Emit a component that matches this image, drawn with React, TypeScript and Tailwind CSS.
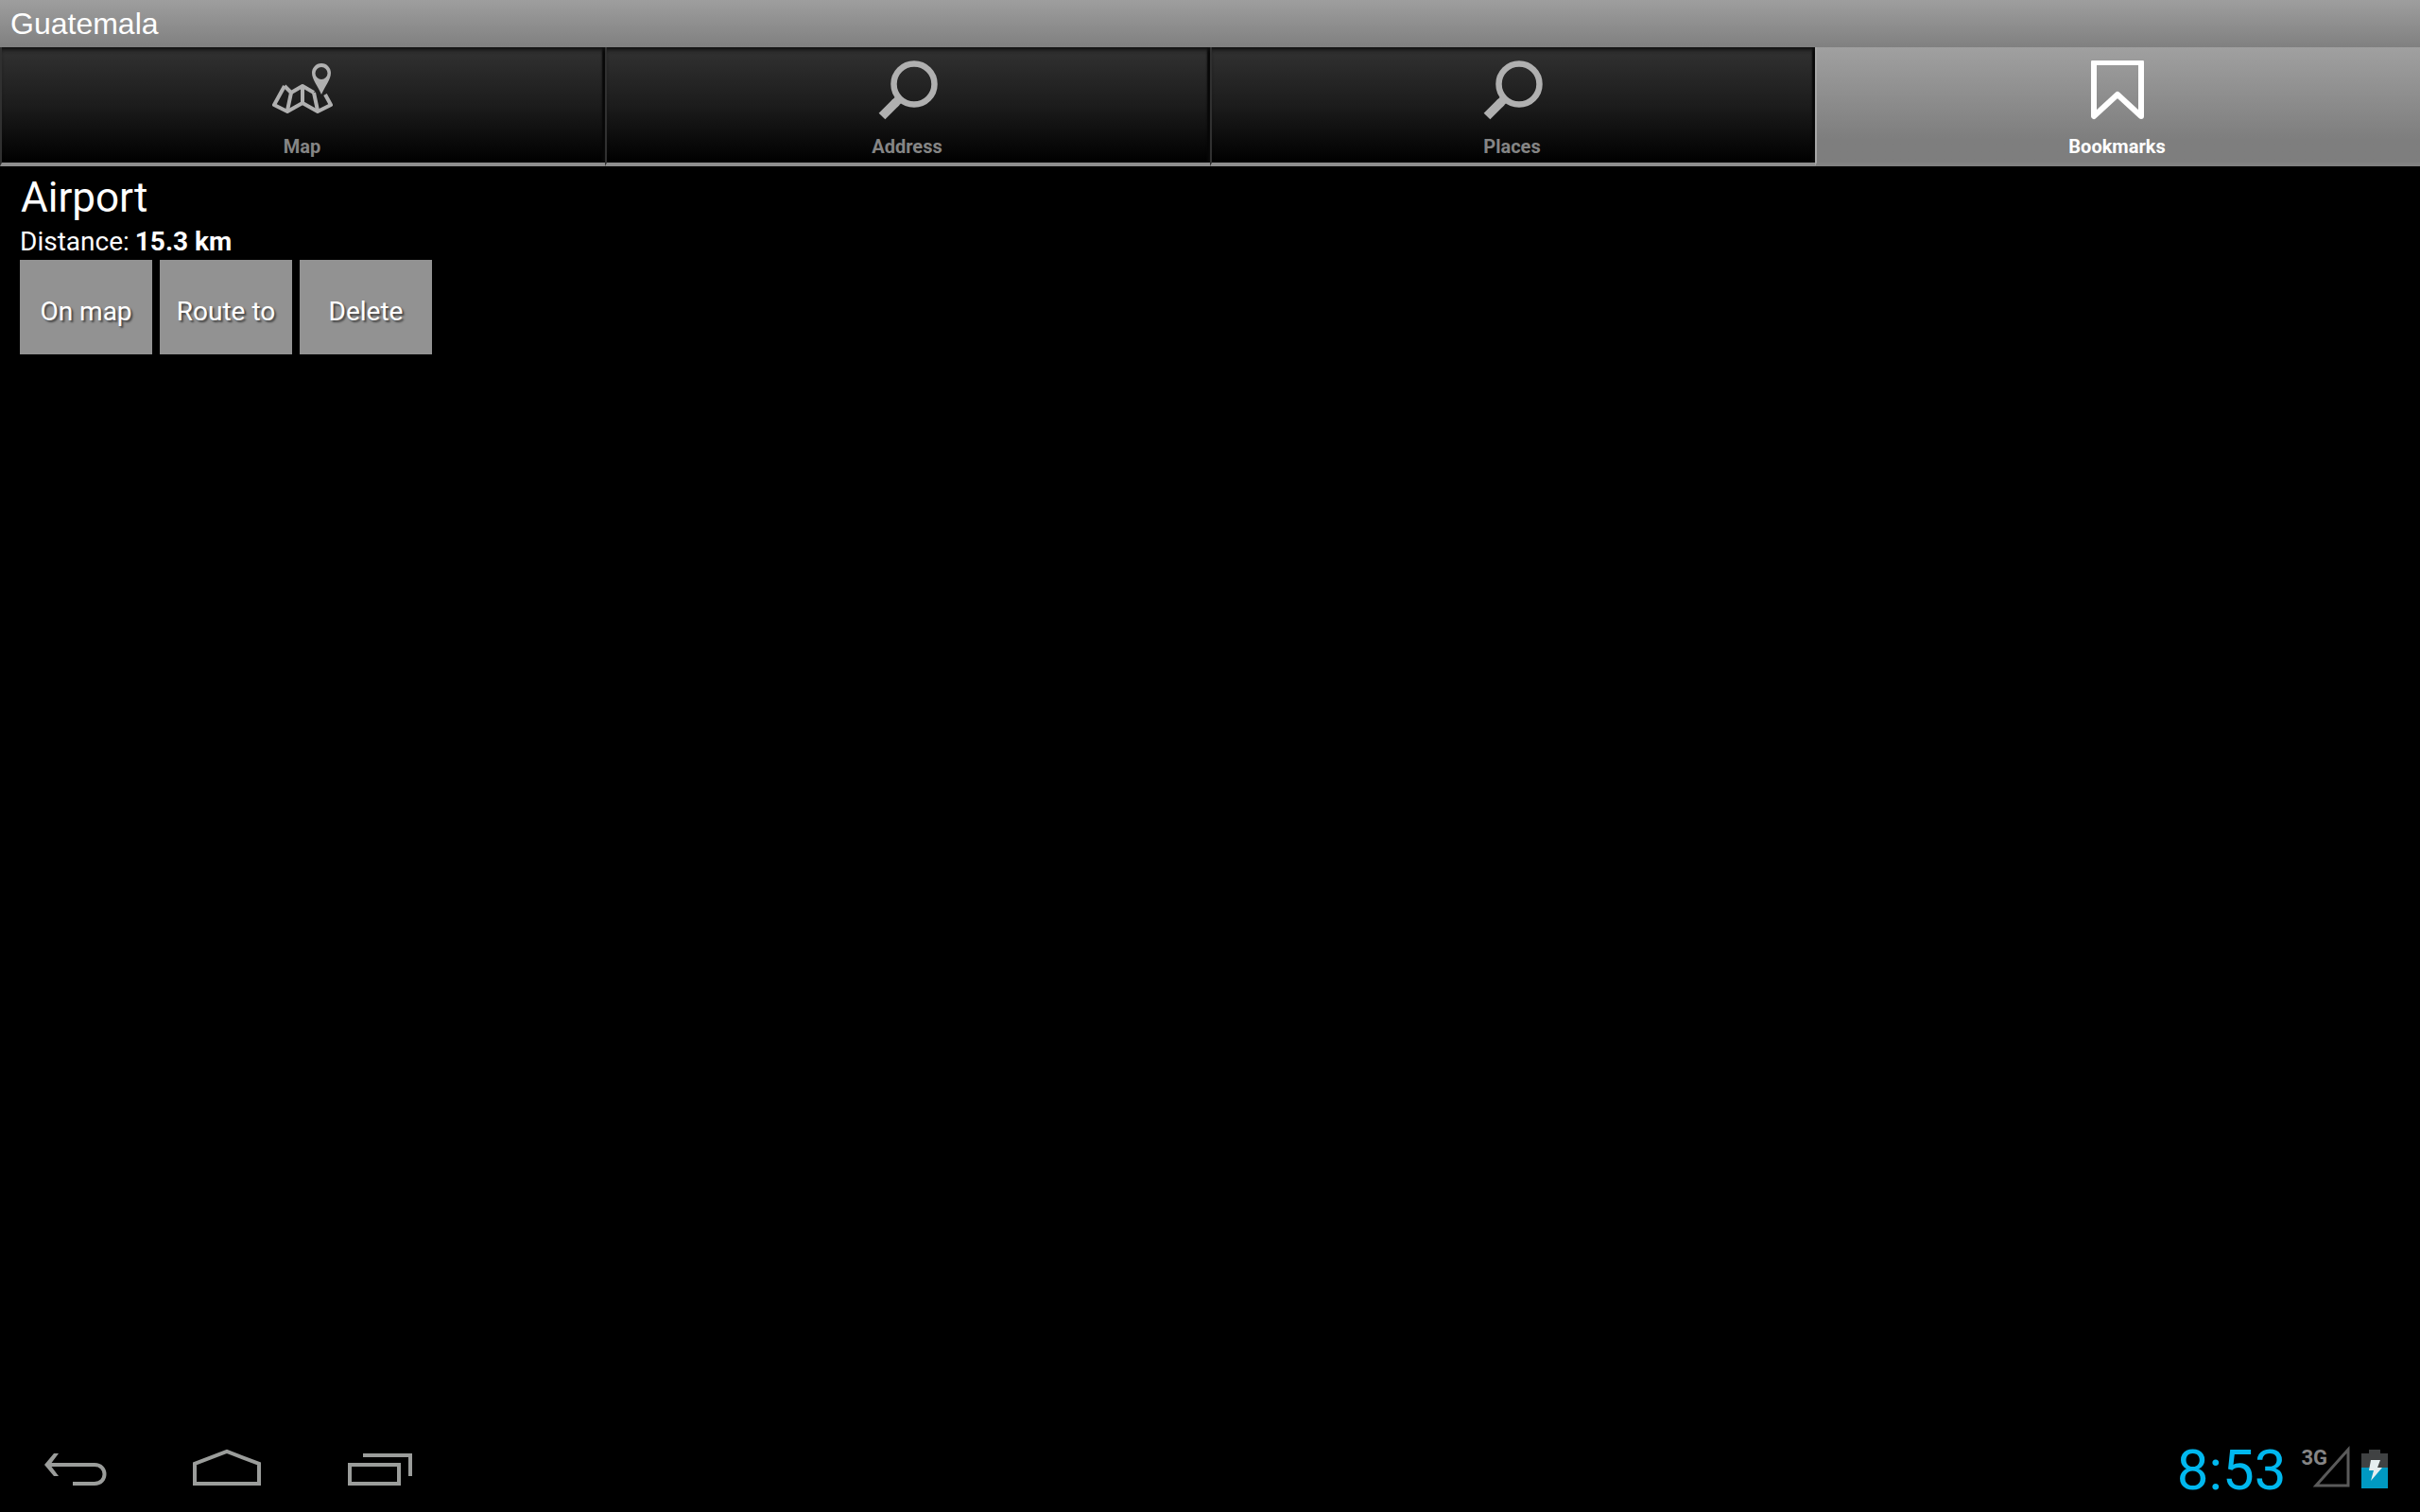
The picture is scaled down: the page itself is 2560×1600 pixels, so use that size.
import { useState } from 'react';

type TabId = 'map' | 'address' | 'places' | 'bookmarks';

function MapIcon() {
  return (
    <svg width="64" height="64" viewBox="0 0 64 64" fill="none" stroke="currentColor" strokeWidth="4" strokeLinejoin="round">
      <path d="M13 27L2 47L16 54L32 45L48 54L62 47L56 36" />
      <path d="M13 27L20 34L32 27L44 34" />
      <path d="M20 34L16 53M32 27V45M44 34L48 53" />
      <path
        fill="currentColor"
        stroke="none"
        fillRule="evenodd"
        d="M52 3C46 3 42 8 42 13C42 20 48 27 52 36C56 27 62 20 62 13C62 8 58 3 52 3ZM52 7A6.5 6.5 0 1 1 52 20A6.5 6.5 0 1 1 52 7Z"
      />
    </svg>
  );
}

function SearchIcon() {
  return (
    <svg width="64" height="64" viewBox="0 0 64 64" fill="none" stroke="currentColor">
      <circle cx="39" cy="25" r="21.5" strokeWidth="6.5" />
      <path d="M24 40L18 46" strokeWidth="9" />
      <path d="M20 44L5 59" strokeWidth="9.5" />
    </svg>
  );
}

function BookmarkIcon() {
  return (
    <svg width="64" height="64" viewBox="0 0 64 64" fill="none" stroke="currentColor" strokeWidth="6" strokeLinejoin="round">
      <path d="M7 2H57V59L32 36L7 59Z" />
    </svg>
  );
}

const tabs = [
  { id: 'map' as TabId, label: 'Map', icon: MapIcon },
  { id: 'address' as TabId, label: 'Address', icon: SearchIcon },
  { id: 'places' as TabId, label: 'Places', icon: SearchIcon },
  { id: 'bookmarks' as TabId, label: 'Bookmarks', icon: BookmarkIcon },
];

const bookmarks = [{ name: 'Airport', distance: '15.3 km' }];

const actions = ['On map', 'Route to', 'Delete'];

function NavBar() {
  return (
    <footer className="flex h-24 items-center justify-between pt-1 pr-[34px] pl-8 text-[#9b9d9b]">
      <nav className="flex items-center gap-[65px]">
        <button aria-label="Back" className="flex w-24 justify-center">
          <svg width="80" height="48" viewBox="0 0 80 48" fill="none" stroke="currentColor" strokeWidth="4">
            <path d="M9 20H60C74 20 74 40 60 40H37" />
            <path d="M7 20L17 8H22L13 20L22 32H17Z" fill="currentColor" stroke="none" />
          </svg>
        </button>
        <button aria-label="Home" className="flex w-24 justify-center">
          <svg width="80" height="48" viewBox="0 0 80 48" fill="none" stroke="currentColor" strokeWidth="4">
            <path d="M5 40V19L39 6L73 19V40Z" />
          </svg>
        </button>
        <button aria-label="Recent apps" className="flex w-24 justify-center">
          <svg width="80" height="48" viewBox="0 0 80 48" fill="none" stroke="currentColor" strokeWidth="4">
            <path d="M8 20H60V40H8Z" />
            <path d="M22 10H72V32" />
          </svg>
        </button>
      </nav>

      <div className="flex items-center gap-4">
        <time className="pt-1 text-[60px] leading-[72px] text-[#00b8ef]">8:53</time>
        <div className="flex h-12 items-start">
          <span className="text-[22px] leading-[26px] font-bold text-[#858585]">3G</span>
          <svg width="40" height="46" viewBox="0 0 40 46" fill="none" stroke="#5a5a5a" strokeWidth="3" className="-ml-4">
            <path d="M4 42H38V4Z" />
          </svg>
        </div>
        <svg width="28" height="44" viewBox="0 0 28 44" className="-ml-1" role="img" aria-label="Battery charging">
          <path d="M0 6H8V2H20V6H28V22H0Z" fill="#404243" />
          <path d="M0 21H28V43H0Z" fill="#0099c2" />
          <path d="M10 13H20L17 21H22L10 35L13 24H8Z" fill="#e6eef0" />
        </svg>
      </div>
    </footer>
  );
}

export default function App() {
  const [activeTab, setActiveTab] = useState<TabId>('bookmarks');

  return (
    <div className="flex min-h-screen flex-col bg-black font-[Roboto,sans-serif] text-white">
      <header className="bg-linear-to-b from-[#9e9e9e] to-[#808080] px-[11px] py-1">
        <h1 className="font-['Liberation_Sans',Arial,sans-serif] text-[32px] leading-[42px]">Guatemala</h1>
      </header>

      {/* Tabs */}
      <div role="tablist" className="grid grid-cols-4">
        {tabs.map((tab) => {
          const Icon = tab.icon;
          const active = activeTab === tab.id;
          return (
            <button
              key={tab.id}
              role="tab"
              aria-selected={active}
              onClick={() => setActiveTab(tab.id)}
              className={`flex h-[126px] flex-col items-center justify-between border-b-4 border-l-2 pt-3.5 pr-[3px] pb-[3px] ${
                active
                  ? 'border-b-[#828282] border-l-[#a6a6a6] bg-linear-to-b from-[#a0a0a0] to-[#7e7e7e] to-80% text-white'
                  : 'border-b-[#8e8e8e] border-l-[#303030] bg-linear-to-b/srgb from-[#323232] via-[#1c1c1c] to-black text-[#b0b0b0] shadow-[inset_0_5px_4px_-2px_#111111,inset_-3px_0_2px_#080808]'
              }`}
            >
              <Icon />
              <span className={`text-[20px] leading-[28px] font-bold ${active ? 'text-white' : 'text-[#858585]'}`}>
                {tab.label}
              </span>
            </button>
          );
        })}
      </div>

      {/* Bookmark list */}
      <main className="flex-1 px-[21px] pt-[7px]">
        {bookmarks.map((bookmark) => (
          <section key={bookmark.name}>
            <h2 className="px-px text-[44px] leading-[52px]">{bookmark.name}</h2>
            <p className="flex gap-1.5 pt-px text-[28px] leading-[39px]">
              <span>Distance:</span>
              <span className="font-bold">{bookmark.distance}</span>
            </p>
            <div className="flex gap-2">
              {actions.map((action) => (
                <button
                  key={action}
                  className="h-[100px] w-[140px] bg-[#929292] pt-2.5 text-[28px] [text-shadow:2px_2px_2px_#444444]"
                >
                  {action}
                </button>
              ))}
            </div>
          </section>
        ))}
      </main>

      <NavBar />
    </div>
  );
}
